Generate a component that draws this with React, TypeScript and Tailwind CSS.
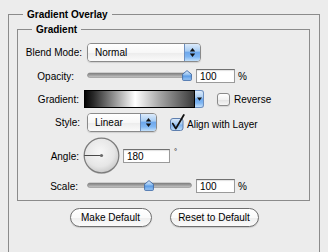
import React from "react";

function Arrows() {
  return (
    <svg width="7" height="11" viewBox="0 0 7 11">
      <path d="M3.5 1 L6.2 4.6 L0.8 4.6 Z" fill="#111" />
      <path d="M0.8 6.4 L6.2 6.4 L3.5 10 Z" fill="#111" />
    </svg>
  );
}

const gel =
  "bg-[linear-gradient(to_bottom,#dcebfb_0%,#a9cdf3_40%,#6ea8ec_50%,#7fb6f3_75%,#c2e0fb_100%)]";

function Popup({ label, className }: { label: string; className: string }) {
  return (
    <div
      className={
        "flex h-[19px] overflow-hidden rounded-[4px] border border-[#8a8a8a] shadow-[0_1px_1px_rgba(0,0,0,0.12)] " +
        className
      }
    >
      <div className="flex flex-1 items-center bg-[linear-gradient(to_bottom,#ffffff_0%,#f7f7f7_50%,#ececec_52%,#fafafa_100%)] pl-[7px]">
        {label}
      </div>
      <div
        className={
          "flex w-[16px] items-center justify-center border-l border-[#6d8fbf] " +
          gel
        }
      >
        <Arrows />
      </div>
    </div>
  );
}

function Slider({ thumb }: { thumb: number }) {
  const c = thumb;
  return (
    <svg width="105" height="12" viewBox="0 0 105 12">
      <defs>
        <linearGradient id={"tr" + thumb} x1="0" y1="0" x2="0" y2="1">
          <stop offset="0" stopColor="#7a7a7a" />
          <stop offset="1" stopColor="#c9c9c9" />
        </linearGradient>
        <linearGradient id={"th" + thumb} x1="0" y1="0" x2="0" y2="1">
          <stop offset="0" stopColor="#e3f0fc" />
          <stop offset="0.45" stopColor="#8dbdf0" />
          <stop offset="0.55" stopColor="#5a9be6" />
          <stop offset="1" stopColor="#9fcaf6" />
        </linearGradient>
      </defs>
      <rect x="0.5" y="3" width="104" height="4.5" rx="2.2" fill={"url(#tr" + thumb + ")"} stroke="#8a8a8a" strokeWidth="0.6" />
      <path
        d={`M${c} 0.6 L${c + 4.4} 4.2 L${c + 4.4} 9.6 Q${c + 4.4} 10.4 ${c + 3.6} 10.4 L${c - 3.6} 10.4 Q${c - 4.4} 10.4 ${c - 4.4} 9.6 L${c - 4.4} 4.2 Z`}
        fill={"url(#th" + thumb + ")"}
        stroke="#3f6aa6"
        strokeWidth="0.9"
        strokeLinejoin="round"
      />
    </svg>
  );
}

function Field({ value, className }: { value: string; className: string }) {
  return (
    <div
      className={
        "flex h-[14px] items-center border border-[#9a9a9a] border-t-[#707070] bg-white pl-[3px] shadow-[inset_0_1px_1px_rgba(0,0,0,0.12)] " +
        className
      }
    >
      {value}
    </div>
  );
}

function Dial() {
  return (
    <svg width="38" height="38" viewBox="0 0 38 38">
      <defs>
        <radialGradient id="dg" cx="0.45" cy="0.4" r="0.65">
          <stop offset="0" stopColor="#f7f7f7" />
          <stop offset="0.65" stopColor="#e6e6e6" />
          <stop offset="1" stopColor="#c4c4c4" />
        </radialGradient>
      </defs>
      <circle cx="18.5" cy="19.2" r="17.8" fill="rgba(0,0,0,0.12)" />
      <circle cx="18.5" cy="18.5" r="17.3" fill="url(#dg)" stroke="#7c7c7c" strokeWidth="1.2" />
      <line x1="1.2" y1="18.5" x2="18.5" y2="18.5" stroke="#4a4a4a" strokeWidth="1" />
      <circle cx="18.5" cy="18.5" r="1.6" fill="#6a6a6a" />
    </svg>
  );
}

function CheckOff() {
  return (
    <div className="h-[13px] w-[13px] rounded-[3px] border border-[#8a8a8a] bg-[linear-gradient(to_bottom,#ffffff,#f2f2f2_50%,#e2e2e2_52%,#f6f6f6)] shadow-[0_1px_1px_rgba(0,0,0,0.1)]" />
  );
}

function CheckOn() {
  return (
    <svg width="15" height="17" viewBox="0 0 15 17">
      <defs>
        <linearGradient id="cb" x1="0" y1="0" x2="0" y2="1">
          <stop offset="0" stopColor="#dcebfb" />
          <stop offset="0.45" stopColor="#a6cbf2" />
          <stop offset="0.55" stopColor="#7fb3ee" />
          <stop offset="1" stopColor="#c3e0fb" />
        </linearGradient>
      </defs>
      <rect x="0.5" y="4.5" width="12.5" height="12" rx="2.5" fill="url(#cb)" stroke="#5f7fae" strokeWidth="1" />
      <path d="M2.8 9.6 L5.8 14.6 L13.8 1" fill="none" stroke="#111" strokeWidth="1.8" strokeLinecap="round" strokeLinejoin="round" />
    </svg>
  );
}

function GradientSwatch() {
  return (
    <div className="flex h-[18px] w-[120px]">
      <div className="flex-1 border border-black bg-[linear-gradient(to_right,#050505_0%,#2a2a2a_8%,#9a9a9a_28%,#ffffff_46%,#a8a8a8_68%,#3a3a3a_100%)]" />
      <div
        className={
          "flex w-[9px] items-center justify-center rounded-r-[3px] border border-l-0 border-[#6d8fbf] " +
          gel
        }
      >
        <svg width="5" height="4" viewBox="0 0 5 4">
          <path d="M0 0.5 L5 0.5 L2.5 3.8 Z" fill="#111" />
        </svg>
      </div>
    </div>
  );
}

function AquaButton({ label, className }: { label: string; className: string }) {
  return (
    <div
      className={
        "flex h-[19px] items-center justify-center rounded-full border border-[#6e6e6e] bg-[linear-gradient(to_bottom,#ffffff_0%,#fafafa_50%,#eeeeee_52%,#fbfbfb_100%)] shadow-[0_1px_1px_rgba(0,0,0,0.15)] " +
        className
      }
    >
      {label}
    </div>
  );
}

export default function App() {
  return (
    <div className="min-h-screen bg-[#ececec] pt-[7px] font-['Liberation_Sans',Arial,sans-serif] text-[10px] leading-[15px] text-black">
      <fieldset className="ml-[8px] w-[312px] border border-[#8b8b8b] pb-[40px]">
        <legend className="ml-[14px] px-[4px] font-bold leading-[15px]">Gradient Overlay</legend>
        <fieldset className="ml-[8px] w-[293px] border border-[#8b8b8b] pt-[6px] pb-[7px]">
          <legend className="ml-[14px] px-[4px] font-bold leading-[15px]">Gradient</legend>

          <div className="flex h-[19px] items-center">
            <div className="w-[64px] text-right">Blend Mode:</div>
            <Popup label="Normal" className="ml-[5px] w-[114px]" />
          </div>

          <div className="mt-[7px] flex h-[14px] items-center">
            <div className="w-[56px] text-right">Opacity:</div>
            <div className="ml-[13px] flex">
              <Slider thumb={100} />
            </div>
            <Field value="100" className="ml-[4px] w-[39px]" />
            <div className="ml-[3px]">%</div>
          </div>

          <div className="mt-[7px] flex h-[18px] items-center">
            <div className="w-[61px] text-right">Gradient:</div>
            <div className="ml-[5px]">
              <GradientSwatch />
            </div>
            <div className="ml-[13px]">
              <CheckOff />
            </div>
            <div className="ml-[4px]">Reverse</div>
          </div>

          <div className="mt-[5px] flex h-[18px] items-center">
            <div className="w-[62px] text-right">Style:</div>
            <Popup label="Linear" className="ml-[7px] w-[70px]" />
            <div className="ml-[13px] flex self-end">
              <CheckOn />
            </div>
            <div className="ml-[2px] mt-[5px]">Align with Layer</div>
          </div>

          <div className="mt-[7px] flex h-[36px] items-center">
            <div className="w-[61px] text-right">Angle:</div>
            <div className="ml-[4px] flex">
              <Dial />
            </div>
            <Field value="180" className="ml-[2px] w-[47px]" />
            <div className="ml-[4px] self-start mt-[10px] text-[8px] leading-[8px]">°</div>
          </div>

          <div className="mt-[5px] flex h-[14px] items-center">
            <div className="w-[60px] text-right">Scale:</div>
            <div className="ml-[9px] flex">
              <Slider thumb={62} />
            </div>
            <Field value="100" className="ml-[4px] w-[39px]" />
            <div className="ml-[3px]">%</div>
          </div>
        </fieldset>

        <div className="mt-[7px] flex justify-center gap-[18px]">
          <AquaButton label="Make Default" className="w-[82px]" />
          <AquaButton label="Reset to Default" className="w-[89px]" />
        </div>
      </fieldset>
    </div>
  );
}
